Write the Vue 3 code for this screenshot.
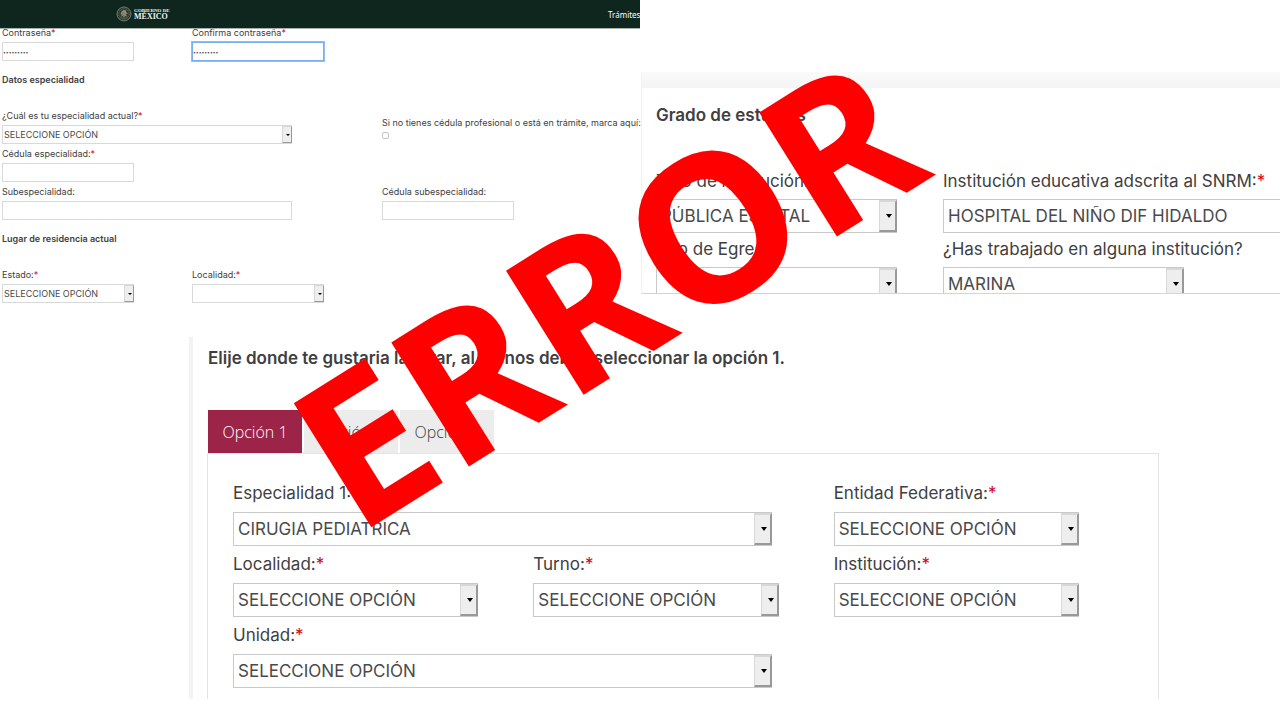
<script setup>
import { ref } from 'vue'

const password = ref('contrasen')
const confirmation = ref('contrasen')
const activeTab = ref(1)
const tabs = [1, 2, 3]
const placeholder = 'SELECCIONE OPCIÓN'
</script>

<template>
  <main class="page">
    <div class="top">
      <section class="account">
        <header class="bar">
          <a class="brand" href="#" aria-label="Gobierno de México">
            <svg class="seal" viewBox="0 0 32 32" aria-hidden="true">
              <circle cx="16" cy="16" r="14" fill="#26382f" stroke="#77796a" stroke-width="2" />
              <circle cx="16" cy="16" r="10.5" fill="none" stroke="#6f735f" stroke-width="2" stroke-dasharray="2 1.5" />
              <path d="M9 17c1-6 4-9 8-9 3 0 4 2 3 4l4 3-4 1 2 5-4-1-2 4-2-4-4 1 2-4z" fill="#8f8d76" />
              <path d="M8 21c4 5 12 5 16 0M13 12l5 5M12 17l5 3" fill="none" stroke="#5f6653" stroke-width="1.5" />
            </svg>
            <span class="brand-text">
              <span class="brand-small">GOBIERNO DE</span>
              <span class="brand-name">MÉXICO</span>
            </span>
          </a>
          <a class="nav" href="#">Trámites</a>
        </header>

        <form class="small-form">
          <div class="row">
            <div class="field">
              <label for="pw">Contraseña<i>*</i></label>
              <input id="pw" v-model="password" class="box secret" type="password" autocomplete="off" />
            </div>
            <div class="field">
              <label for="pw2">Confirma contraseña<i>*</i></label>
              <input id="pw2" v-model="confirmation" class="box secret focused" type="password" autocomplete="off" />
            </div>
          </div>

          <h2>Datos especialidad</h2>
          <div class="row">
            <div class="field long">
              <label for="esp">¿Cuál es tu especialidad actual?<i>*</i></label>
              <span class="select"><select id="esp" class="box"><option>{{ placeholder }}</option></select></span>
            </div>
            <div class="field check">
              <label for="tramite">Si no tienes cédula profesional o está en trámite, marca aquí:</label>
              <input id="tramite" type="checkbox" />
            </div>
          </div>
          <div class="row">
            <div class="field">
              <label for="ced">Cédula especialidad:<i>*</i></label>
              <input id="ced" class="box" type="text" />
            </div>
          </div>
          <div class="row">
            <div class="field long">
              <label for="sub">Subespecialidad:</label>
              <input id="sub" class="box" type="text" />
            </div>
            <div class="field">
              <label for="cedsub">Cédula subespecialidad:</label>
              <input id="cedsub" class="box" type="text" />
            </div>
          </div>

          <h2>Lugar de residencia actual</h2>
          <div class="row">
            <div class="field">
              <label for="edo">Estado:<i>*</i></label>
              <span class="select"><select id="edo" class="box"><option>{{ placeholder }}</option></select></span>
            </div>
            <div class="field">
              <label for="loc">Localidad:<i>*</i></label>
              <span class="select"><select id="loc" class="box"><option></option></select></span>
            </div>
          </div>
        </form>
      </section>

      <section class="studies">
        <h2>Grado de estudios</h2>
        <form class="studies-grid">
          <div class="field">
            <label for="tipo">Tipo de institución:<i>*</i></label>
            <span class="select"><select id="tipo" class="box"><option>PÚBLICA ESTATAL</option></select></span>
          </div>
          <div class="field cut">
            <label for="snrm">Institución educativa adscrita al SNRM:<i>*</i></label>
            <span class="select"><select id="snrm" class="box"><option>HOSPITAL DEL NIÑO DIF HIDALDO</option></select></span>
          </div>
          <div class="field">
            <label for="egreso">Año de Egreso:<i>*</i></label>
            <span class="select"><select id="egreso" class="box"><option></option></select></span>
          </div>
          <div class="field">
            <label for="trab">¿Has trabajado en alguna institución?</label>
            <span class="select"><select id="trab" class="box"><option>MARINA</option></select></span>
          </div>
        </form>
      </section>
    </div>

    <section class="choices">
      <h2>Elije donde te gustaria laborar, al menos debes seleccionar la opción 1.</h2>
      <div class="tabs" role="tablist">
        <button
          v-for="n in tabs"
          :key="n"
          type="button"
          role="tab"
          :aria-selected="activeTab === n"
          :class="{ active: activeTab === n }"
          @click="activeTab = n"
        >Opción {{ n }}</button>
      </div>
      <form class="choice-grid">
        <div class="field wide">
          <label for="c-esp">Especialidad {{ activeTab }}:<i>*</i></label>
          <span class="select"><select id="c-esp" class="box"><option>CIRUGIA PEDIATRICA</option></select></span>
        </div>
        <div class="field">
          <label for="c-ent">Entidad Federativa:<i>*</i></label>
          <span class="select"><select id="c-ent" class="box"><option>{{ placeholder }}</option></select></span>
        </div>
        <div class="field">
          <label for="c-loc">Localidad:<i>*</i></label>
          <span class="select"><select id="c-loc" class="box"><option>{{ placeholder }}</option></select></span>
        </div>
        <div class="field">
          <label for="c-tur">Turno:<i>*</i></label>
          <span class="select"><select id="c-tur" class="box"><option>{{ placeholder }}</option></select></span>
        </div>
        <div class="field">
          <label for="c-ins">Institución:<i>*</i></label>
          <span class="select"><select id="c-ins" class="box"><option>{{ placeholder }}</option></select></span>
        </div>
        <div class="field wide">
          <label for="c-uni">Unidad:<i>*</i></label>
          <span class="select"><select id="c-uni" class="box"><option>{{ placeholder }}</option></select></span>
        </div>
      </form>
    </section>

    <strong class="stamp">ERROR</strong>
  </main>
</template>

<style>
body {
  background: #fff;
}
</style>

<style scoped>
* {
  box-sizing: border-box;
}

.page {
  position: relative;
  overflow: hidden;
  padding-bottom: 21px;
  color: #404041;
  font-family: Inter, "Open Sans", sans-serif;
  font-size: 17px;
}

h2 {
  margin: 0;
  font-size: inherit;
  font-weight: 600;
  white-space: nowrap;
}

.top {
  display: grid;
  grid-template-columns: 1fr 1fr;
}

.account {
  min-width: 0;
  font-size: 9px;
}

.bar {
  position: relative;
  display: flex;
  align-items: center;
  height: 29px;
  padding-left: 116px;
  overflow: hidden;
  background: #0f261f;
  border-bottom: 1px solid #a9b1ad;
}

.brand {
  display: flex;
  align-items: center;
  gap: 2px;
  margin-right: auto;
  color: #f3f3ee;
  text-decoration: none;
}

.seal {
  width: 16px;
  height: 16px;
}

.brand-text {
  display: flex;
  flex-direction: column;
  font-family: "Liberation Serif", serif;
  font-weight: 700;
  line-height: 1;
}

.brand-small {
  font-size: 5px;
}

.brand-name {
  font-size: 8px;
}

.nav {
  flex: none;
  width: 32px;
  color: #fff;
  font-family: "Noto Sans", sans-serif;
  font-size: 8px;
  text-decoration: none;
}

.small-form {
  margin-top: -4px;
  padding-left: 2px;
}

.small-form h2 {
  margin: 11px 0 20px;
  line-height: 16px;
}

.row {
  display: grid;
  grid-template-columns: repeat(3, 132px);
  column-gap: 58px;
  margin-bottom: 2px;
}

.long {
  grid-column: span 2;
  padding-right: 32px;
}

.field {
  display: flex;
  flex-direction: column;
  align-items: stretch;
  min-width: 0;
}

label {
  white-space: nowrap;
}

label i {
  color: #d0021b;
  font-style: normal;
}

.small-form label {
  margin-bottom: 2px;
  line-height: 15px;
}

.box {
  display: block;
  width: 100%;
  height: 34px;
  margin: 0;
  padding: 0 4px;
  appearance: none;
  background: #fff;
  border: 1px solid #c9c9c9;
  border-radius: 0;
  color: #4a4a4a;
  font: inherit;
  outline: none;
}

.small-form .box {
  height: 19px;
  padding: 0 1px;
  border-color: #d9d9d9;
}

.small-form .secret {
  padding: 0;
  font-size: 5px;
}

.small-form .focused {
  border-color: #79aef0;
  box-shadow: 0 0 0 1px #8fbef5;
}

.check {
  padding-top: 7px;
}

.check input {
  width: 7px;
  height: 7px;
  margin: 0;
  appearance: none;
  background: #fff;
  border: 1px solid #c4c4c4;
  border-radius: 2px;
}

.select {
  position: relative;
  display: block;
}

.select::before {
  content: "";
  position: absolute;
  top: 1px;
  right: 0;
  bottom: 1px;
  width: 15px;
  background: #eee;
  border: 2px solid;
  border-color: #d8d8d8 #999 #999 #d8d8d8;
  border-left-width: 1px;
  pointer-events: none;
}

.select::after {
  content: "";
  position: absolute;
  top: 50%;
  right: 5px;
  margin-top: -2px;
  border: 3px solid transparent;
  border-top: 4px solid #000;
  border-bottom: 0;
  pointer-events: none;
}

.small-form .select::before {
  width: 8px;
  border-width: 1px;
}

.small-form .select::after {
  right: 2px;
  margin-top: -1px;
  border-width: 2px 2px 0;
}

.studies {
  align-self: start;
  height: 222px;
  min-width: 0;
  margin: 72px 0 0 1px;
  padding: 16px 0 0 14px;
  overflow: hidden;
  background: linear-gradient(#fafafa, #f4f4f4) top / 100% 16px no-repeat;
  border-left: 1px solid #f1f1f1;
  border-bottom: 1px solid #d4d4d4;
}

.studies h2 {
  margin: 16px 0 44px;
  line-height: 22px;
}

.studies-grid {
  display: grid;
  grid-template-columns: 241px 241px;
  gap: 5px 46px;
}

.studies label {
  margin-bottom: 7px;
  line-height: 22px;
}

.studies .box {
  height: 34px;
}

.cut .select {
  width: 400px;
}

.choices {
  margin: 32px 121px 0 189px;
  padding: 10px 0 0 14px;
  border-left: 4px solid #f3f3f3;
}

.choices h2 {
  padding-left: 1px;
  line-height: 22px;
}

.tabs {
  display: flex;
  gap: 2px;
  margin: 41px 0 0 1px;
}

.tabs button {
  width: 94px;
  height: 43px;
  padding: 0;
  background: #ececec;
  border: 0;
  color: #404041;
  font-family: "Open Sans", sans-serif;
  font-size: 16px;
  font-weight: 300;
}

.tabs .active {
  background: #9d2449;
  color: #fff;
}

.choice-grid {
  display: grid;
  grid-template-columns: repeat(3, minmax(0, 1fr));
  gap: 7px 55px;
  padding: 28px 79px 11px 25px;
  border: solid #e4e4e4;
  border-width: 1px 1px 0;
}

.choice-grid label {
  margin-bottom: 8px;
  line-height: 22px;
}

.wide {
  grid-column: span 2;
  padding-right: 7px;
}

.stamp {
  position: absolute;
  top: 470px;
  left: 314px;
  color: #f00;
  font-family: "Open Sans", sans-serif;
  font-size: 205px;
  font-weight: 740;
  line-height: 0;
  white-space: nowrap;
  transform: rotate(-32deg);
  transform-origin: 0 0;
  pointer-events: none;
}
</style>
